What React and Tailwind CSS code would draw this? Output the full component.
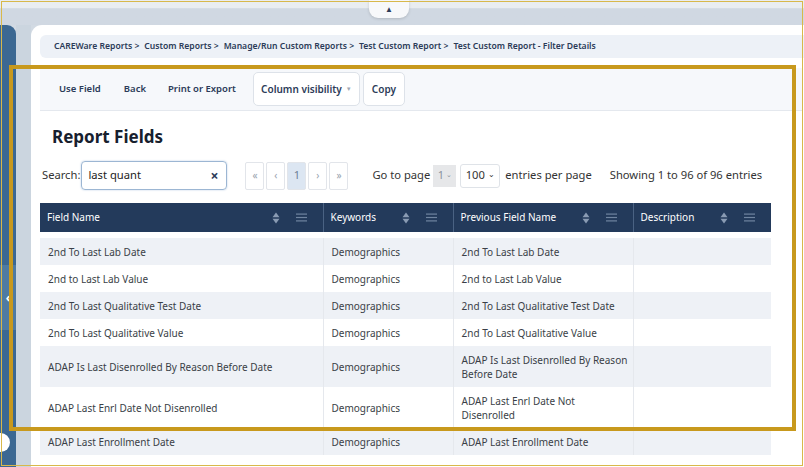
import React from 'react'

const rows = [
  ["2nd To Last Lab Date", "Demographics", ["2nd To Last Lab Date"]],
  ["2nd to Last Lab Value", "Demographics", ["2nd to Last Lab Value"]],
  ["2nd To Last Qualitative Test Date", "Demographics", ["2nd To Last Qualitative Test Date"]],
  ["2nd To Last Qualitative Value", "Demographics", ["2nd To Last Qualitative Value"]],
  ["ADAP Is Last Disenrolled By Reason Before Date", "Demographics", ["ADAP Is Last Disenrolled By Reason", "Before Date"]],
  ["ADAP Last Enrl Date Not Disenrolled", "Demographics", ["ADAP Last Enrl Date Not", "Disenrolled"]],
  ["ADAP Last Enrollment Date", "Demographics", ["ADAP Last Enrollment Date"]],
]

const crumbs = ["CAREWare Reports", "Custom Reports", "Manage/Run Custom Reports", "Test Custom Report"]

const SortIcon = () => (
  <svg width="8" height="12" viewBox="0 0 8 12">
    <path d="M4 0.5 L7.5 5.2 H0.5 Z" fill="#8a9bb3" />
    <path d="M4 11.5 L7.5 6.8 H0.5 Z" fill="#8a9bb3" />
  </svg>
)

const MenuIcon = () => (
  <svg width="11" height="9" viewBox="0 0 11 9">
    <rect x="0" y="0.5" width="11" height="1.2" fill="#6f84a0" />
    <rect x="0" y="3.9" width="11" height="1.2" fill="#6f84a0" />
    <rect x="0" y="7.3" width="11" height="1.2" fill="#6f84a0" />
  </svg>
)

const HeadCell = ({label, last}) => (
  <th className={"h-[29px] p-0 font-normal text-left " + (last ? "" : "border-r border-[#4a6283]")}>
    <div className="flex items-center pl-[7px] pr-[16px]">
      <span className="text-white text-[10px]">{label}</span>
      <span className="ml-auto flex items-center gap-[16px]">
        <SortIcon />
        <MenuIcon />
      </span>
    </div>
  </th>
)

const PageBox = ({children, active}) => (
  <div className={"w-[19px] h-[28px] flex items-center justify-center border border-[#e2e5ea] rounded-[2px] " + (active ? "bg-[#dce6f2] text-[#6d7f96] text-[11px]" : "bg-white text-[#98a2ae] text-[10px]")}>
    {children}
  </div>
)

export default function App() {
  return (
    <div className="relative w-[804px] h-[467px] overflow-hidden bg-[#d2dae3] font-['Noto_Sans',sans-serif]">
      <div className="h-[25px] bg-gradient-to-b from-[#e9edf1] from-30% to-[#d0d8e2] to-35%"></div>
      <div className="flex h-[442px]">
        {/* sidebar */}
        <div className="relative w-[16px] bg-[#3c6892] rounded-tr-[9px] flex flex-col">
          <div className="mt-[240px] h-[65px] bg-[#4f7ba2] flex items-center justify-center">
            <span className="text-white text-[12px] font-bold leading-none">‹</span>
          </div>
          <div className="absolute left-[-9px] top-[408px] w-[19px] h-[19px] rounded-full bg-white"></div>
        </div>
        <div className="w-[15px] bg-[#cbd5df]"></div>
        {/* main card */}
        <div className="flex-1 bg-white rounded-tl-[11px] pl-[9px] pt-[10px]">
          <div className="h-[23px] bg-[#edf1f7] rounded-l-[6px] flex items-center pl-[14px] text-[8.6px] font-semibold text-[#2b3b58] whitespace-nowrap">
            {crumbs.map(c => (
              <span key={c} className="mr-[5px]">{c} &gt;</span>
            ))}
            <span>Test Custom Report - Filter Details</span>
          </div>
          <div className="mt-[10px] mr-[2px] h-[43px] bg-[#f6f8fb] border-b border-[#e4e8ee] flex items-center pl-[19px] text-[9.5px] font-semibold text-[#2b3b58]">
            <span>Use Field</span>
            <span className="ml-[23px]">Back</span>
            <span className="ml-[22px]">Print or Export</span>
            <div className="ml-[17px] w-[107px] h-[34px] bg-white border border-[#dde2e9] rounded-[5px] flex items-center justify-center gap-[4px] text-[10px]">
              <span>Column visibility</span>
              <span className="text-[6px] text-[#a0a8b3]">▼</span>
            </div>
            <div className="ml-[3px] w-[42px] h-[34px] bg-white border border-[#dde2e9] rounded-[5px] flex items-center justify-center text-[10px]">
              Copy
            </div>
          </div>

          <h1 className="ml-[12px] mt-[14px] text-[17px] leading-[24px] font-bold text-[#17202e]">Report Fields</h1>

          <div className="mt-[12px] ml-[2px] flex items-center text-[11.2px] text-[#333]">
            <span>Search:</span>
            <div className="ml-[1px] w-[146px] h-[29px] border border-[#9cb6d3] rounded-[4px] shadow-[0_0_2px_#b7cbe2] flex items-center pl-[6px] pr-[8px]">
              <span className="text-[#222]">last quant</span>
              <span className="ml-auto text-[14px] font-bold text-[#2b3b58] leading-none">×</span>
            </div>
            <div className="ml-[18px] flex gap-[2px]">
              <PageBox>«</PageBox>
              <PageBox>‹</PageBox>
              <PageBox active>1</PageBox>
              <PageBox>›</PageBox>
              <PageBox>»</PageBox>
            </div>
            <span className="ml-[24px]">Go to page</span>
            <div className="ml-[3px] h-[22px] w-[23px] bg-[#e6e7e9] flex items-center justify-center gap-[2px] text-[#8a929c] text-[11px]">
              1<span className="text-[7px]">⌄</span>
            </div>
            <div className="ml-[4px] h-[24px] w-[40px] bg-white border border-[#dfe3e8] rounded-[3px] flex items-center justify-center gap-[3px]">
              100<span className="text-[8px] -mt-[4px]">⌄</span>
            </div>
            <span className="ml-[5px]">entries per page</span>
            <span className="ml-[18px]">Showing 1 to 96 of 96 entries</span>
          </div>

          <table className="mt-[13px] table-fixed border-collapse w-[731px]">
            <colgroup>
              <col className="w-[283px]" />
              <col className="w-[130px]" />
              <col className="w-[180px]" />
              <col className="w-[138px]" />
            </colgroup>
            <thead className="bg-[#233a5b]">
              <tr>
                <HeadCell label="Field Name" />
                <HeadCell label="Keywords" />
                <HeadCell label="Previous Field Name" />
                <HeadCell label="Description" last />
              </tr>
            </thead>
            <tbody className="text-[10px] leading-[14px] text-[#3a3f47]">
              <tr><td colSpan={4} className="h-[6px] p-0"></td></tr>
              {rows.map((r, i) => (
                <tr key={i} className={i % 2 === 0 ? "bg-[#eef1f6]" : "bg-white"}>
                  <td className="py-[6.5px] pl-[8px] border-r border-[#e5e8ed] align-middle">{r[0]}</td>
                  <td className="py-[6.5px] pl-[8px] border-r border-[#e5e8ed] align-middle">{r[1]}</td>
                  <td className="py-[6.5px] pl-[8px] border-r border-[#e5e8ed] align-middle">
                    {r[2].map(l => <div key={l}>{l}</div>)}
                  </td>
                  <td></td>
                </tr>
              ))}
            </tbody>
          </table>
        </div>
      </div>

      {/* top collapse tab */}
      <div className="absolute left-[369px] top-0 w-[40px] h-[18px] bg-[#f7f8fa] rounded-b-[9px] shadow-[0_1px_3px_rgba(0,0,0,0.15)] flex items-center justify-center">
        <span className="text-[8px] text-[#2b3b58] leading-none">▲</span>
      </div>

      {/* annotation frames */}
      <div className="absolute left-[1px] top-[1px] w-[802px] h-[465px] border-[1.5px] border-[#d8b84a] pointer-events-none"></div>
      <div className="absolute left-[9px] top-[65px] w-[787px] h-[366px] border-[4px] border-[#c8991d] pointer-events-none"></div>
    </div>
  )
}
